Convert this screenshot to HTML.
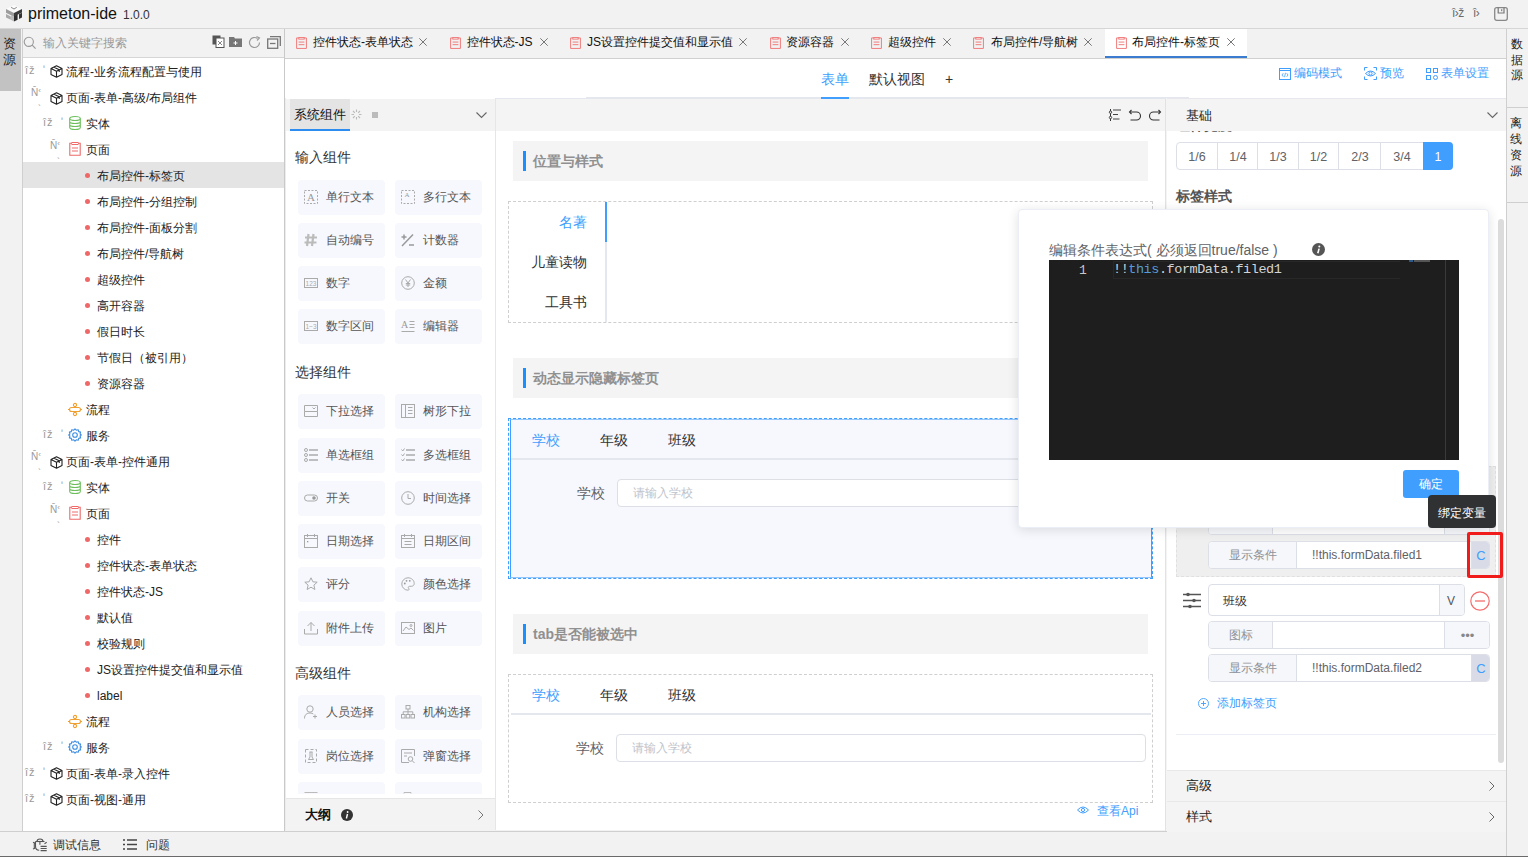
<!DOCTYPE html>
<html><head><meta charset="utf-8">
<style>
*{box-sizing:border-box;margin:0;padding:0}
html,body{width:1528px;height:857px;overflow:hidden;background:#f2f2f2;font-family:"Liberation Sans",sans-serif;font-size:12px;color:#333;position:relative}
.a{position:absolute}
.t{position:absolute;white-space:nowrap;line-height:1}
svg{position:absolute;overflow:visible}
/* title */
#title{left:0;top:0;width:1528px;height:29px;background:#f2f2f2;border-bottom:1px solid #d6d6d6}
/* left */
#lstrip{left:0;top:29px;width:22px;height:802px;background:#f2f2f2}
#lpanel{left:22px;top:29px;width:263px;height:802px;background:#fff;border-left:1px solid #cfcfcf;border-right:1px solid #c9c9c9}
.tr{position:absolute;left:0;width:261px;height:26px;line-height:26px;font-size:12px;color:#222}
.tr span{position:absolute;top:1px}
.dot{position:absolute;width:5px;height:5px;border-radius:50%;background:#f06767;top:11px;left:63px}
.exp{position:absolute;top:0;color:#aaa;font-size:11px}
/* status */
#status{left:0;top:831px;width:1506px;height:26px;background:#f2f2f2;border-top:1px solid #cfcfcf}
/* tabs */
#tabs{left:285px;top:29px;width:1221px;height:30px;background:#f2f2f2;border-bottom:1px solid #d0d0d0}
#sub{left:285px;top:59px;width:1221px;height:39px;background:#fff}
#comp{left:285px;top:98px;width:210px;height:732px;background:#fff;border-left:1px solid #ececec}
#canvas{left:495px;top:98px;width:671px;height:732px;background:#fff;border-left:1px solid #e6e6e6}
#props{left:1166px;top:98px;width:340px;height:733px;background:#fff;border-left:1px solid #f4f4f4}
#rstrip{left:1506px;top:29px;width:22px;height:828px;background:#f2f2f2;border-left:1px solid #cfcfcf}
.cb{position:absolute;width:87px;height:35px;background:#f7f8fd;border-radius:4px}
</style></head><body>
<!-- TITLE -->
<div id="title" class="a">
  <svg style="left:0px;top:0px" width="28" height="28" viewBox="0 0 28 28">
    <path d="M6 9 L14 5 L22 9 L14 13Z" fill="#fbfbfb"/>
    <path d="M11 6.8 L14 8.6 L16.8 6.8 L16.8 7.8 L14 9.4 L11 7.8Z" fill="#8a8a8a"/>
    <path d="M6 9 L14 13 L14 16.8 L6 12.8Z" fill="#9c9c9c"/>
    <path d="M6 14 L10.8 16.4 L10.8 19.8 L6 17.4Z" fill="#a8a8a8"/>
    <path d="M11 15 L14 16.6 L14 21.6 L11 20Z" fill="#bdbdbd"/>
    <path d="M14 13 L22 9 L22 12.6 L14 16.6Z" fill="#3a3a3a"/>
    <path d="M14 16 L17.6 14.2 L17.6 19.8 L14 21.6Z" fill="#2e2e2e"/>
    <path d="M19 14.2 L22 12.7 L22 17.6 L19 19Z" fill="#333"/>
  </svg>
  <span class="t" style="left:28px;top:6px;font-size:16px;color:#111">primeton-ide</span>
  <span class="t" style="left:123px;top:9px;font-size:12px;color:#333">1.0.0</span>
  <span class="t" style="left:1452px;top:7px;font-size:12px;color:#6a6a6a;letter-spacing:-0.5px">î›ž</span>
  <span class="t" style="left:1473px;top:7px;font-size:12px;color:#6a6a6a;letter-spacing:-0.5px">î›</span>
  <svg style="left:1494px;top:7px" width="14" height="14" viewBox="0 0 14 14"><rect x="0.7" y="0.7" width="12.6" height="12.6" rx="2" fill="none" stroke="#888" stroke-width="1.3"/><path d="M4.2 0.7 V6 H10 V0.7" fill="none" stroke="#777" stroke-width="1.2"/><rect x="7" y="2.2" width="1.3" height="2" fill="#888"/></svg>
</div>
<!-- LEFT STRIP -->
<div id="lstrip" class="a">
  <div class="a" style="left:0;top:0;width:21px;height:62px;background:#c2c2c2"></div>
  <span class="t" style="left:3px;top:7px;font-size:13px;color:#222;width:13px;white-space:normal;line-height:15.75px">资源</span>
</div>
<!-- LEFT PANEL -->
<div id="lpanel" class="a">
  <div class="a" style="left:0;top:0;width:261px;height:29px;background:#f2f2f2;border-bottom:1px solid #d6d6d6"></div>
  <svg style="left:0px;top:7px" width="14" height="14" viewBox="0 0 14 14"><circle cx="5.8" cy="5.8" r="4.6" fill="none" stroke="#999" stroke-width="1.1"/><path d="M9.2 9.2 L12.6 12.6" stroke="#999" stroke-width="1.2"/></svg>
  <span class="t" style="left:20px;top:8px;font-size:12px;color:#999">输入关键字搜索</span>
  <svg style="left:189px;top:6px" width="13" height="13" viewBox="0 0 13 13"><rect x="0.5" y="0.5" width="8" height="9" fill="#555"/><rect x="4" y="3" width="8" height="9.5" fill="#fff" stroke="#555" stroke-width="1"/><path d="M6 6 L10 10 M10 6 L6 10" stroke="#666" stroke-width="0.8"/></svg>
  <svg style="left:206px;top:7px" width="13" height="11" viewBox="0 0 13 11"><path d="M0 1 L5 1 L6 2.5 L13 2.5 L13 11 L0 11Z" fill="#777"/><path d="M6.5 5 L6.5 9 M4.5 7 L8.5 7" stroke="#fff" stroke-width="1"/></svg>
  <svg style="left:225px;top:7px" width="13" height="13" viewBox="0 0 13 13"><path d="M11.5 6.5 A5 5 0 1 1 9.5 2.5" fill="none" stroke="#999" stroke-width="1.2"/><path d="M8.5 0.5 L11.5 2 L9 4.5" fill="none" stroke="#999" stroke-width="1.1"/></svg>
  <svg style="left:244px;top:7px" width="14" height="13" viewBox="0 0 14 13"><rect x="0.7" y="3" width="10" height="9.3" fill="none" stroke="#777" stroke-width="1.3"/><path d="M3 0.7 L13.3 0.7 L13.3 10" fill="none" stroke="#777" stroke-width="1.3"/><path d="M3 7.5 L8.5 7.5" stroke="#777" stroke-width="1.3"/></svg>
  <div class="a" style="left:0;top:29px;width:261px;height:773px" id="tree">
<div class="tr" style="top:0px;"><span class="t" style="left:2px;top:7px;font-size:11px;color:#9a9a9a;letter-spacing:1px">îž</span><span class="t" style="left:20px;top:7px;font-size:10px;color:#9a9a9a">ʹ</span><svg style="left:27px;top:7px" width="13" height="13" viewBox="0 0 13 13"><path d="M6.5 0.8 L12 3.4 L12 9.6 L6.5 12.2 L1 9.6 L1 3.4Z M1 3.4 L6.5 6.2 L12 3.4 M6.5 6.2 L6.5 12.2 M3.6 2.1 L9.2 4.8 L9.2 7" fill="none" stroke="#222" stroke-width="1.1" stroke-linejoin="round"/></svg><span style="left:43px">流程-业务流程配置与使用</span></div>
<div class="tr" style="top:26px;"><span class="t" style="left:8px;top:3px;font-size:10px;color:#9a9a9a">N̄<small style="font-size:8px;vertical-align:3px">‹</small></span><span class="t" style="left:15px;top:20px;font-size:9px;color:#9a9a9a">`</span><svg style="left:27px;top:8px" width="13" height="13" viewBox="0 0 13 13"><path d="M6.5 0.8 L12 3.4 L12 9.6 L6.5 12.2 L1 9.6 L1 3.4Z M1 3.4 L6.5 6.2 L12 3.4 M6.5 6.2 L6.5 12.2 M3.6 2.1 L9.2 4.8 L9.2 7" fill="none" stroke="#222" stroke-width="1.1" stroke-linejoin="round"/></svg><span style="left:43px">页面-表单-高级/布局组件</span></div>
<div class="tr" style="top:52px;"><span class="t" style="left:20px;top:7px;font-size:11px;color:#9a9a9a;letter-spacing:1px">îž</span><span class="t" style="left:38px;top:7px;font-size:10px;color:#9a9a9a">ʹ</span><svg style="left:46px;top:6px" width="12" height="14" viewBox="0 0 12 14"><ellipse cx="6" cy="2.5" rx="5.3" ry="2" fill="none" stroke="#6cbf5c" stroke-width="1.1"/><path d="M0.7 2.5 V11.5 A5.3 2 0 0 0 11.3 11.5 V2.5 M0.7 5.5 A5.3 2 0 0 0 11.3 5.5 M0.7 8.5 A5.3 2 0 0 0 11.3 8.5" fill="none" stroke="#6cbf5c" stroke-width="1.1"/></svg><span style="left:63px">实体</span></div>
<div class="tr" style="top:78px;"><span class="t" style="left:27px;top:4px;font-size:10px;color:#9a9a9a">N̄<small style="font-size:8px;vertical-align:3px">‹</small></span><span class="t" style="left:34px;top:21px;font-size:9px;color:#9a9a9a">`</span><svg style="left:46px;top:6px" width="12" height="14" viewBox="0 0 12 14"><path d="M3 1.2 H0.8 V13.2 H11.2 V1.2 H9" fill="none" stroke="#f06a6a" stroke-width="1.1"/><rect x="3" y="0.5" width="6" height="2" fill="none" stroke="#f06a6a" stroke-width="1"/><path d="M3 6 H9 M3 9 H9" stroke="#f06a6a" stroke-width="1.1"/></svg><span style="left:63px">页面</span></div>
<div class="tr" style="top:104px;background:#e4e4e4"><i class="dot" style="left:62px"></i><span style="left:74px">布局控件-标签页</span></div>
<div class="tr" style="top:130px;"><i class="dot" style="left:62px"></i><span style="left:74px">布局控件-分组控制</span></div>
<div class="tr" style="top:156px;"><i class="dot" style="left:62px"></i><span style="left:74px">布局控件-面板分割</span></div>
<div class="tr" style="top:182px;"><i class="dot" style="left:62px"></i><span style="left:74px">布局控件/导航树</span></div>
<div class="tr" style="top:208px;"><i class="dot" style="left:62px"></i><span style="left:74px">超级控件</span></div>
<div class="tr" style="top:234px;"><i class="dot" style="left:62px"></i><span style="left:74px">高开容器</span></div>
<div class="tr" style="top:260px;"><i class="dot" style="left:62px"></i><span style="left:74px">假日时长</span></div>
<div class="tr" style="top:286px;"><i class="dot" style="left:62px"></i><span style="left:74px">节假日（被引用）</span></div>
<div class="tr" style="top:312px;"><i class="dot" style="left:62px"></i><span style="left:74px">资源容器</span></div>
<div class="tr" style="top:338px;"><svg style="left:45px;top:7px" width="14" height="13" viewBox="0 0 14 13"><circle cx="7" cy="2" r="1.6" fill="none" stroke="#f0a030" stroke-width="1.1"/><circle cx="7" cy="11" r="1.6" fill="none" stroke="#f0a030" stroke-width="1.1"/><rect x="1.5" y="4.5" width="11" height="4" rx="2" fill="none" stroke="#f0a030" stroke-width="1.1"/><path d="M7 3.6 V4.5 M7 8.5 V9.4 M0 6.5 H1.5 M12.5 6.5 H14" stroke="#f0a030" stroke-width="1.1"/></svg><span style="left:63px">流程</span></div>
<div class="tr" style="top:364px;"><span class="t" style="left:20px;top:7px;font-size:11px;color:#9a9a9a;letter-spacing:1px">îž</span><span class="t" style="left:38px;top:7px;font-size:10px;color:#9a9a9a">ʹ</span><svg style="left:45px;top:6px" width="14" height="14" viewBox="0 0 14 14"><path d="M7 0.8 L8.3 2.2 L10.2 1.7 L10.7 3.6 L12.6 4.1 L12.1 6 L13.3 7 L12.1 8 L12.6 9.9 L10.7 10.4 L10.2 12.3 L8.3 11.8 L7 13.2 L5.7 11.8 L3.8 12.3 L3.3 10.4 L1.4 9.9 L1.9 8 L0.7 7 L1.9 6 L1.4 4.1 L3.3 3.6 L3.8 1.7 L5.7 2.2Z" fill="none" stroke="#3d8fe0" stroke-width="1.1" stroke-linejoin="round"/><circle cx="7" cy="7" r="2.3" fill="none" stroke="#3d8fe0" stroke-width="1.1"/></svg><span style="left:63px">服务</span></div>
<div class="tr" style="top:390px;"><span class="t" style="left:8px;top:3px;font-size:10px;color:#9a9a9a">N̄<small style="font-size:8px;vertical-align:3px">‹</small></span><span class="t" style="left:15px;top:20px;font-size:9px;color:#9a9a9a">`</span><svg style="left:27px;top:8px" width="13" height="13" viewBox="0 0 13 13"><path d="M6.5 0.8 L12 3.4 L12 9.6 L6.5 12.2 L1 9.6 L1 3.4Z M1 3.4 L6.5 6.2 L12 3.4 M6.5 6.2 L6.5 12.2 M3.6 2.1 L9.2 4.8 L9.2 7" fill="none" stroke="#222" stroke-width="1.1" stroke-linejoin="round"/></svg><span style="left:43px">页面-表单-控件通用</span></div>
<div class="tr" style="top:416px;"><span class="t" style="left:20px;top:7px;font-size:11px;color:#9a9a9a;letter-spacing:1px">îž</span><span class="t" style="left:38px;top:7px;font-size:10px;color:#9a9a9a">ʹ</span><svg style="left:46px;top:6px" width="12" height="14" viewBox="0 0 12 14"><ellipse cx="6" cy="2.5" rx="5.3" ry="2" fill="none" stroke="#6cbf5c" stroke-width="1.1"/><path d="M0.7 2.5 V11.5 A5.3 2 0 0 0 11.3 11.5 V2.5 M0.7 5.5 A5.3 2 0 0 0 11.3 5.5 M0.7 8.5 A5.3 2 0 0 0 11.3 8.5" fill="none" stroke="#6cbf5c" stroke-width="1.1"/></svg><span style="left:63px">实体</span></div>
<div class="tr" style="top:442px;"><span class="t" style="left:27px;top:4px;font-size:10px;color:#9a9a9a">N̄<small style="font-size:8px;vertical-align:3px">‹</small></span><span class="t" style="left:34px;top:21px;font-size:9px;color:#9a9a9a">`</span><svg style="left:46px;top:6px" width="12" height="14" viewBox="0 0 12 14"><path d="M3 1.2 H0.8 V13.2 H11.2 V1.2 H9" fill="none" stroke="#f06a6a" stroke-width="1.1"/><rect x="3" y="0.5" width="6" height="2" fill="none" stroke="#f06a6a" stroke-width="1"/><path d="M3 6 H9 M3 9 H9" stroke="#f06a6a" stroke-width="1.1"/></svg><span style="left:63px">页面</span></div>
<div class="tr" style="top:468px;"><i class="dot" style="left:62px"></i><span style="left:74px">控件</span></div>
<div class="tr" style="top:494px;"><i class="dot" style="left:62px"></i><span style="left:74px">控件状态-表单状态</span></div>
<div class="tr" style="top:520px;"><i class="dot" style="left:62px"></i><span style="left:74px">控件状态-JS</span></div>
<div class="tr" style="top:546px;"><i class="dot" style="left:62px"></i><span style="left:74px">默认值</span></div>
<div class="tr" style="top:572px;"><i class="dot" style="left:62px"></i><span style="left:74px">校验规则</span></div>
<div class="tr" style="top:598px;"><i class="dot" style="left:62px"></i><span style="left:74px">JS设置控件提交值和显示值</span></div>
<div class="tr" style="top:624px;"><i class="dot" style="left:62px"></i><span style="left:74px">label</span></div>
<div class="tr" style="top:650px;"><svg style="left:45px;top:7px" width="14" height="13" viewBox="0 0 14 13"><circle cx="7" cy="2" r="1.6" fill="none" stroke="#f0a030" stroke-width="1.1"/><circle cx="7" cy="11" r="1.6" fill="none" stroke="#f0a030" stroke-width="1.1"/><rect x="1.5" y="4.5" width="11" height="4" rx="2" fill="none" stroke="#f0a030" stroke-width="1.1"/><path d="M7 3.6 V4.5 M7 8.5 V9.4 M0 6.5 H1.5 M12.5 6.5 H14" stroke="#f0a030" stroke-width="1.1"/></svg><span style="left:63px">流程</span></div>
<div class="tr" style="top:676px;"><span class="t" style="left:20px;top:7px;font-size:11px;color:#9a9a9a;letter-spacing:1px">îž</span><span class="t" style="left:38px;top:7px;font-size:10px;color:#9a9a9a">ʹ</span><svg style="left:45px;top:6px" width="14" height="14" viewBox="0 0 14 14"><path d="M7 0.8 L8.3 2.2 L10.2 1.7 L10.7 3.6 L12.6 4.1 L12.1 6 L13.3 7 L12.1 8 L12.6 9.9 L10.7 10.4 L10.2 12.3 L8.3 11.8 L7 13.2 L5.7 11.8 L3.8 12.3 L3.3 10.4 L1.4 9.9 L1.9 8 L0.7 7 L1.9 6 L1.4 4.1 L3.3 3.6 L3.8 1.7 L5.7 2.2Z" fill="none" stroke="#3d8fe0" stroke-width="1.1" stroke-linejoin="round"/><circle cx="7" cy="7" r="2.3" fill="none" stroke="#3d8fe0" stroke-width="1.1"/></svg><span style="left:63px">服务</span></div>
<div class="tr" style="top:702px;"><span class="t" style="left:2px;top:7px;font-size:11px;color:#9a9a9a;letter-spacing:1px">îž</span><span class="t" style="left:20px;top:7px;font-size:10px;color:#9a9a9a">ʹ</span><svg style="left:27px;top:7px" width="13" height="13" viewBox="0 0 13 13"><path d="M6.5 0.8 L12 3.4 L12 9.6 L6.5 12.2 L1 9.6 L1 3.4Z M1 3.4 L6.5 6.2 L12 3.4 M6.5 6.2 L6.5 12.2 M3.6 2.1 L9.2 4.8 L9.2 7" fill="none" stroke="#222" stroke-width="1.1" stroke-linejoin="round"/></svg><span style="left:43px">页面-表单-录入控件</span></div>
<div class="tr" style="top:728px;"><span class="t" style="left:2px;top:7px;font-size:11px;color:#9a9a9a;letter-spacing:1px">îž</span><span class="t" style="left:20px;top:7px;font-size:10px;color:#9a9a9a">ʹ</span><svg style="left:27px;top:7px" width="13" height="13" viewBox="0 0 13 13"><path d="M6.5 0.8 L12 3.4 L12 9.6 L6.5 12.2 L1 9.6 L1 3.4Z M1 3.4 L6.5 6.2 L12 3.4 M6.5 6.2 L6.5 12.2 M3.6 2.1 L9.2 4.8 L9.2 7" fill="none" stroke="#222" stroke-width="1.1" stroke-linejoin="round"/></svg><span style="left:43px">页面-视图-通用</span></div>
</div>
</div>
<!-- STATUS -->
<div id="status" class="a">
  <svg style="left:28px;top:2px" width="24" height="20" viewBox="0 0 24 20"><path d="M9 7.5 A3 2.5 0 0 1 15 7.5" fill="none" stroke="#555" stroke-width="1.1"/><path d="M7.5 7.5 H16.5" stroke="#555" stroke-width="1.1"/><path d="M7.5 7.5 V12 Q7.5 16.3 11.2 16.3" fill="none" stroke="#555" stroke-width="1.1"/><path d="M11.9 7.5 V10.7" stroke="#555" stroke-width="1.1"/><path d="M5 8.3 L7.5 9.3 M6.3 9.3 V14 M5 15 L7.5 14 M16.5 9.7 L18.7 8.3" fill="none" stroke="#555" stroke-width="1.1"/><path d="M12.6 12.4 H18.7 M12.6 14.5 H18.7 M12.6 16.6 H18.7" stroke="#555" stroke-width="1.1"/></svg>
  <span class="t" style="left:53px;top:7px;font-size:12px;color:#333">调试信息</span>
  <svg style="left:123px;top:7px" width="14" height="11" viewBox="0 0 14 11"><path d="M0 1 H2 M0 5.5 H2 M0 10 H2 M4 1 H14 M4 5.5 H14 M4 10 H14" stroke="#444" stroke-width="1.3"/></svg>
  <span class="t" style="left:146px;top:7px;font-size:12px;color:#333">问题</span>
</div>
<!-- TABS -->
<div id="tabs" class="a">
<div class="a" style="left:820px;top:0;width:142px;height:29px;background:#fff;border-bottom:2px solid #3b7bd0"></div>
<svg style="left:11px;top:8px" width="11" height="12" viewBox="0 0 11 13" preserveAspectRatio="none"><path d="M2.8 1 H0.6 V12.4 H10.4 V1 H8.2" fill="none" stroke="#f07878" stroke-width="1"/><rect x="2.8" y="0.5" width="5.4" height="1.8" fill="none" stroke="#f07878" stroke-width="1"/><path d="M2.6 5.5 H8.4 M2.6 8.3 H8.4" stroke="#f07878" stroke-width="1"/></svg>
<span class="t" style="left:28px;top:7px;font-size:12px;color:#111">控件状态-表单状态</span>
<svg style="left:134px;top:9px" width="8" height="8" viewBox="0 0 8 8"><path d="M0.3 0.3 L7.7 7.7 M7.7 0.3 L0.3 7.7" stroke="#777" stroke-width="1"/></svg>
<svg style="left:165px;top:8px" width="11" height="12" viewBox="0 0 11 13" preserveAspectRatio="none"><path d="M2.8 1 H0.6 V12.4 H10.4 V1 H8.2" fill="none" stroke="#f07878" stroke-width="1"/><rect x="2.8" y="0.5" width="5.4" height="1.8" fill="none" stroke="#f07878" stroke-width="1"/><path d="M2.6 5.5 H8.4 M2.6 8.3 H8.4" stroke="#f07878" stroke-width="1"/></svg>
<span class="t" style="left:181.5px;top:7px;font-size:12px;color:#111">控件状态-JS</span>
<svg style="left:255px;top:9px" width="8" height="8" viewBox="0 0 8 8"><path d="M0.3 0.3 L7.7 7.7 M7.7 0.3 L0.3 7.7" stroke="#777" stroke-width="1"/></svg>
<svg style="left:285px;top:8px" width="11" height="12" viewBox="0 0 11 13" preserveAspectRatio="none"><path d="M2.8 1 H0.6 V12.4 H10.4 V1 H8.2" fill="none" stroke="#f07878" stroke-width="1"/><rect x="2.8" y="0.5" width="5.4" height="1.8" fill="none" stroke="#f07878" stroke-width="1"/><path d="M2.6 5.5 H8.4 M2.6 8.3 H8.4" stroke="#f07878" stroke-width="1"/></svg>
<span class="t" style="left:302px;top:7px;font-size:12px;color:#111">JS设置控件提交值和显示值</span>
<svg style="left:454px;top:9px" width="8" height="8" viewBox="0 0 8 8"><path d="M0.3 0.3 L7.7 7.7 M7.7 0.3 L0.3 7.7" stroke="#777" stroke-width="1"/></svg>
<svg style="left:485px;top:8px" width="11" height="12" viewBox="0 0 11 13" preserveAspectRatio="none"><path d="M2.8 1 H0.6 V12.4 H10.4 V1 H8.2" fill="none" stroke="#f07878" stroke-width="1"/><rect x="2.8" y="0.5" width="5.4" height="1.8" fill="none" stroke="#f07878" stroke-width="1"/><path d="M2.6 5.5 H8.4 M2.6 8.3 H8.4" stroke="#f07878" stroke-width="1"/></svg>
<span class="t" style="left:501px;top:7px;font-size:12px;color:#111">资源容器</span>
<svg style="left:556px;top:9px" width="8" height="8" viewBox="0 0 8 8"><path d="M0.3 0.3 L7.7 7.7 M7.7 0.3 L0.3 7.7" stroke="#777" stroke-width="1"/></svg>
<svg style="left:586px;top:8px" width="11" height="12" viewBox="0 0 11 13" preserveAspectRatio="none"><path d="M2.8 1 H0.6 V12.4 H10.4 V1 H8.2" fill="none" stroke="#f07878" stroke-width="1"/><rect x="2.8" y="0.5" width="5.4" height="1.8" fill="none" stroke="#f07878" stroke-width="1"/><path d="M2.6 5.5 H8.4 M2.6 8.3 H8.4" stroke="#f07878" stroke-width="1"/></svg>
<span class="t" style="left:603px;top:7px;font-size:12px;color:#111">超级控件</span>
<svg style="left:658px;top:9px" width="8" height="8" viewBox="0 0 8 8"><path d="M0.3 0.3 L7.7 7.7 M7.7 0.3 L0.3 7.7" stroke="#777" stroke-width="1"/></svg>
<svg style="left:688px;top:8px" width="11" height="12" viewBox="0 0 11 13" preserveAspectRatio="none"><path d="M2.8 1 H0.6 V12.4 H10.4 V1 H8.2" fill="none" stroke="#f07878" stroke-width="1"/><rect x="2.8" y="0.5" width="5.4" height="1.8" fill="none" stroke="#f07878" stroke-width="1"/><path d="M2.6 5.5 H8.4 M2.6 8.3 H8.4" stroke="#f07878" stroke-width="1"/></svg>
<span class="t" style="left:706px;top:7px;font-size:12px;color:#111">布局控件/导航树</span>
<svg style="left:799px;top:9px" width="8" height="8" viewBox="0 0 8 8"><path d="M0.3 0.3 L7.7 7.7 M7.7 0.3 L0.3 7.7" stroke="#777" stroke-width="1"/></svg>
<svg style="left:831px;top:8px" width="11" height="12" viewBox="0 0 11 13" preserveAspectRatio="none"><path d="M2.8 1 H0.6 V12.4 H10.4 V1 H8.2" fill="none" stroke="#f07878" stroke-width="1"/><rect x="2.8" y="0.5" width="5.4" height="1.8" fill="none" stroke="#f07878" stroke-width="1"/><path d="M2.6 5.5 H8.4 M2.6 8.3 H8.4" stroke="#f07878" stroke-width="1"/></svg>
<span class="t" style="left:847px;top:7px;font-size:12px;color:#111">布局控件-标签页</span>
<svg style="left:942px;top:9px" width="8" height="8" viewBox="0 0 8 8"><path d="M0.3 0.3 L7.7 7.7 M7.7 0.3 L0.3 7.7" stroke="#777" stroke-width="1"/></svg>
</div>
<div id="sub" class="a">
<span class="t" style="left:536px;top:13px;font-size:14px;color:#409eff">表单</span>
<div class="a" style="left:536px;top:38px;width:28px;height:2px;background:#409eff"></div>
<span class="t" style="left:584px;top:13px;font-size:14px;color:#333">默认视图</span>
<span class="t" style="left:660px;top:13px;font-size:14px;color:#333">+</span>
<div class="a" style="left:0;top:39px;width:1221px;height:1px;background:#f1eced"></div><div class="a" style="left:301px;top:38px;width:603px;height:2px;background:#e4e7ed"></div>
<div class="a" style="left:536px;top:38px;width:28px;height:2px;background:#409eff"></div>
<svg style="left:994px;top:9px" width="12" height="12" viewBox="0 0 12 12"><rect x="0.5" y="0.5" width="11" height="11" fill="none" stroke="#409eff" stroke-width="1"/><path d="M0.5 2.5 H11.5" stroke="#409eff" stroke-width="1"/><path d="M4.3 5.2 L3 7 L4.3 8.8 M7.7 5.2 L9 7 L7.7 8.8 M6.5 4.8 L5.5 9.2" fill="none" stroke="#409eff" stroke-width="0.8"/></svg>
<span class="t" style="left:1009px;top:8px;font-size:12px;color:#409eff">编码模式</span>
<svg style="left:1079px;top:8px" width="13" height="13" viewBox="0 0 13 13"><path d="M0.5 3.5 V0.5 H3.5 M9.5 0.5 H12.5 V3.5 M12.5 9.5 V12.5 H9.5 M3.5 12.5 H0.5 V9.5" fill="none" stroke="#409eff" stroke-width="1"/><path d="M1.5 6.5 Q6.5 1.5 11.5 6.5 Q6.5 11.5 1.5 6.5Z" fill="none" stroke="#409eff" stroke-width="1"/><circle cx="6.5" cy="6.5" r="1.6" fill="none" stroke="#409eff" stroke-width="1"/></svg>
<span class="t" style="left:1095px;top:8px;font-size:12px;color:#409eff">预览</span>
<svg style="left:1141px;top:9px" width="12" height="12" viewBox="0 0 12 12"><rect x="0.5" y="0.5" width="4" height="4" fill="none" stroke="#409eff" stroke-width="1"/><rect x="7.5" y="0.5" width="4" height="4" fill="none" stroke="#409eff" stroke-width="1"/><rect x="0.5" y="7.5" width="4" height="4" fill="none" stroke="#409eff" stroke-width="1"/><circle cx="9.5" cy="9.5" r="2" fill="none" stroke="#409eff" stroke-width="1"/></svg>
<span class="t" style="left:1156px;top:8px;font-size:12px;color:#409eff">表单设置</span>
</div>
<div id="comp" class="a">
<div class="a" style="left:0;top:1px;width:209px;height:32px;background:#f3f3f3"></div>
<div class="a" style="left:4px;top:1px;width:60px;height:32px;background:#e4e4e4;border-bottom:2px solid #2d8cf0"></div>
<span class="t" style="left:8px;top:10px;font-size:13px;color:#111">系统组件</span>
<svg style="left:65px;top:11px" width="11" height="11" viewBox="0 0 11 11"><path d="M5.5 0.5 V3 M5.5 8 V10.5 M0.5 5.5 H3 M8 5.5 H10.5 M2 2 L3.8 3.8 M7.2 7.2 L9 9 M9 2 L7.2 3.8 M3.8 7.2 L2 9" stroke="#bbb" stroke-width="1.1"/></svg>
<div class="a" style="left:86px;top:14px;width:6px;height:6px;background:#bbb"></div>
<svg style="left:190px;top:14px" width="11" height="7" viewBox="0 0 11 7"><path d="M0.5 0.5 L5.5 5.5 L10.5 0.5" stroke="#666" stroke-width="1.1" fill="none"/></svg>
<div class="a" style="left:0;top:32px;width:209px;height:664px;overflow:hidden">
<span class="t" style="left:9px;top:20px;font-size:14px;color:#333">输入组件</span>
<span class="t" style="left:9px;top:235px;font-size:14px;color:#333">选择组件</span>
<span class="t" style="left:9px;top:536px;font-size:14px;color:#333">高级组件</span>
<div class="cb" style="left:12px;top:50px"></div><svg style="left:18px;top:60px" width="14" height="14" viewBox="0 0 14 14"><rect x="0.5" y="0.5" width="13" height="13" stroke="#aaa" stroke-width="1" fill="none" stroke-dasharray="2 1.5"/><text x="7" y="11" font-size="11" font-family="Liberation Serif" text-anchor="middle" fill="#999">A</text></svg><span class="t" style="left:40px;top:61px;font-size:12px;color:#555">单行文本</span>
<div class="cb" style="left:109px;top:50px"></div><svg style="left:115px;top:60px" width="14" height="14" viewBox="0 0 14 14"><rect x="0.5" y="0.5" width="13" height="13" stroke="#aaa" stroke-width="1" fill="none" stroke-dasharray="2 1.5"/><text x="6" y="7" font-size="7" font-family="Liberation Serif" text-anchor="middle" fill="#999">A</text></svg><span class="t" style="left:137px;top:61px;font-size:12px;color:#555">多行文本</span>
<div class="cb" style="left:12px;top:93px"></div><svg style="left:18px;top:103px" width="14" height="14" viewBox="0 0 14 14"><path d="M4.5 1 L3 13 M9.5 1 L8 13 M1 4.5 H13 M0.5 9.5 H12.5" stroke="#bbb" stroke-width="2.2" fill="none"/></svg><span class="t" style="left:40px;top:104px;font-size:12px;color:#555">自动编号</span>
<div class="cb" style="left:109px;top:93px"></div><svg style="left:115px;top:103px" width="14" height="14" viewBox="0 0 14 14"><path d="M0.5 4 H5.5 M3 1.5 V6.5 M1 13 L12 1.5 M8 12 H13" stroke="#999" stroke-width="1.5" fill="none"/></svg><span class="t" style="left:137px;top:104px;font-size:12px;color:#555">计数器</span>
<div class="cb" style="left:12px;top:136px"></div><svg style="left:18px;top:146px" width="14" height="14" viewBox="0 0 14 14"><rect x="0.5" y="2.5" width="13" height="9" stroke="#aaa" stroke-width="1" fill="none"/><text x="7" y="10" font-size="6.5" text-anchor="middle" fill="#aaa">123</text></svg><span class="t" style="left:40px;top:147px;font-size:12px;color:#555">数字</span>
<div class="cb" style="left:109px;top:136px"></div><svg style="left:115px;top:146px" width="14" height="14" viewBox="0 0 14 14"><circle cx="7" cy="7" r="6.3" stroke="#aaa" stroke-width="1" fill="none"/><path d="M4.5 3.5 L7 7 L9.5 3.5 M7 7 V11 M4.8 7.5 H9.2 M4.8 9 H9.2" stroke="#aaa" stroke-width="1" fill="none"/></svg><span class="t" style="left:137px;top:147px;font-size:12px;color:#555">金额</span>
<div class="cb" style="left:12px;top:179px"></div><svg style="left:18px;top:189px" width="14" height="14" viewBox="0 0 14 14"><rect x="0.5" y="2.5" width="13" height="9" stroke="#aaa" stroke-width="1" fill="none"/><text x="7" y="10" font-size="6.5" text-anchor="middle" fill="#aaa">1~3</text></svg><span class="t" style="left:40px;top:190px;font-size:12px;color:#555">数字区间</span>
<div class="cb" style="left:109px;top:179px"></div><svg style="left:115px;top:189px" width="14" height="14" viewBox="0 0 14 14"><text x="0" y="9" font-size="10" fill="#999" font-family="Liberation Serif">A</text><path d="M8.5 2.5 H13.5 M8.5 5.5 H13.5 M8.5 8.5 H13.5 M0.5 12.5 H13.5" stroke="#aaa" stroke-width="1" fill="none"/></svg><span class="t" style="left:137px;top:190px;font-size:12px;color:#555">编辑器</span>
<div class="cb" style="left:12px;top:264px"></div><svg style="left:18px;top:274px" width="14" height="14" viewBox="0 0 14 14"><path d="M0.5 1.5 H13.5 V7.5 H0.5Z M0.5 7.5 V12.5 H13.5 V7.5 M8.5 3.5 L10 5 L11.5 3.5" stroke="#aaa" stroke-width="1" fill="none"/></svg><span class="t" style="left:40px;top:275px;font-size:12px;color:#555">下拉选择</span>
<div class="cb" style="left:109px;top:264px"></div><svg style="left:115px;top:274px" width="14" height="14" viewBox="0 0 14 14"><rect x="0.5" y="0.5" width="13" height="13" stroke="#aaa" stroke-width="1" fill="none"/><path d="M4.5 0.5 V13.5 M7 3.5 H11.5 M7 6.5 H11.5 M7 9.5 H11.5" stroke="#aaa" stroke-width="1" fill="none"/></svg><span class="t" style="left:137px;top:275px;font-size:12px;color:#555">树形下拉</span>
<div class="cb" style="left:12px;top:308px"></div><svg style="left:18px;top:318px" width="14" height="14" viewBox="0 0 14 14"><circle cx="2" cy="2" r="1.5" stroke="#aaa" stroke-width="1" fill="none"/><circle cx="2" cy="7" r="1.5" stroke="#aaa" stroke-width="1" fill="none"/><circle cx="2" cy="12" r="1.5" stroke="#aaa" stroke-width="1" fill="none"/><path d="M5 2 H14 M5 7 H14 M5 12 H14" stroke="#aaa" stroke-width="1.3"/></svg><span class="t" style="left:40px;top:319px;font-size:12px;color:#555">单选框组</span>
<div class="cb" style="left:109px;top:308px"></div><svg style="left:115px;top:318px" width="14" height="14" viewBox="0 0 14 14"><path d="M0.5 1.5 L1.8 3 L3.5 0.5 M0.5 6.5 L1.8 8 L3.5 5.5 M0.5 11.5 L1.8 13 L3.5 10.5" stroke="#aaa" stroke-width="1" fill="none"/><path d="M5 2 H14 M5 7 H14 M5 12 H14" stroke="#aaa" stroke-width="1.3"/></svg><span class="t" style="left:137px;top:319px;font-size:12px;color:#555">多选框组</span>
<div class="cb" style="left:12px;top:351px"></div><svg style="left:18px;top:361px" width="14" height="14" viewBox="0 0 14 14"><rect x="0.5" y="4" width="13" height="6" rx="3" stroke="#aaa" stroke-width="1" fill="none"/><circle cx="10" cy="7" r="1.8" fill="#999"/></svg><span class="t" style="left:40px;top:362px;font-size:12px;color:#555">开关</span>
<div class="cb" style="left:109px;top:351px"></div><svg style="left:115px;top:361px" width="14" height="14" viewBox="0 0 14 14"><circle cx="7" cy="7" r="6.3" stroke="#aaa" stroke-width="1" fill="none"/><path d="M7 3 V7.5 H10" stroke="#aaa" stroke-width="1" fill="none"/></svg><span class="t" style="left:137px;top:362px;font-size:12px;color:#555">时间选择</span>
<div class="cb" style="left:12px;top:394px"></div><svg style="left:18px;top:404px" width="14" height="14" viewBox="0 0 14 14"><rect x="0.5" y="1.5" width="13" height="12" stroke="#aaa" stroke-width="1" fill="none"/><path d="M0.5 4.5 H13.5 M3.5 0 V3 M10.5 0 V3" stroke="#aaa" stroke-width="1" fill="none"/><rect x="3" y="7" width="1.3" height="1.3" fill="#999"/></svg><span class="t" style="left:40px;top:405px;font-size:12px;color:#555">日期选择</span>
<div class="cb" style="left:109px;top:394px"></div><svg style="left:115px;top:404px" width="14" height="14" viewBox="0 0 14 14"><rect x="0.5" y="1.5" width="13" height="12" stroke="#aaa" stroke-width="1" fill="none"/><path d="M0.5 4.5 H13.5 M3.5 0 V3 M10.5 0 V3 M3.5 7.5 H10.5 M3.5 10.5 H10.5" stroke="#aaa" stroke-width="1" fill="none"/></svg><span class="t" style="left:137px;top:405px;font-size:12px;color:#555">日期区间</span>
<div class="cb" style="left:12px;top:437px"></div><svg style="left:18px;top:447px" width="14" height="14" viewBox="0 0 14 14"><path d="M7 0.8 L8.9 4.8 L13.2 5.2 L9.9 8.1 L10.9 12.5 L7 10.2 L3.1 12.5 L4.1 8.1 L0.8 5.2 L5.1 4.8Z" stroke="#aaa" stroke-width="1" fill="none" stroke-linejoin="round"/></svg><span class="t" style="left:40px;top:448px;font-size:12px;color:#555">评分</span>
<div class="cb" style="left:109px;top:437px"></div><svg style="left:115px;top:447px" width="14" height="14" viewBox="0 0 14 14"><path d="M7 0.8 A6.2 6.2 0 1 0 7 13.2 C8.2 13.2 8.3 12 7.6 11.3 C6.9 10.5 7.4 9.3 8.5 9.3 H10.3 C12 9.3 13.2 8.2 13.2 6.5 C13.2 3.3 10.5 0.8 7 0.8Z" stroke="#aaa" stroke-width="1" fill="none"/><circle cx="3.8" cy="6.5" r="0.9" fill="#999"/><circle cx="5.5" cy="3.8" r="0.9" fill="#999"/><circle cx="8.8" cy="3.8" r="0.9" fill="#999"/></svg><span class="t" style="left:137px;top:448px;font-size:12px;color:#555">颜色选择</span>
<div class="cb" style="left:12px;top:481px"></div><svg style="left:18px;top:491px" width="14" height="14" viewBox="0 0 14 14"><path d="M0.5 8 V13 H13.5 V8 M7 10 V1.5 M3.5 5 L7 1.5 L10.5 5" stroke="#aaa" stroke-width="1" fill="none"/></svg><span class="t" style="left:40px;top:492px;font-size:12px;color:#555">附件上传</span>
<div class="cb" style="left:109px;top:481px"></div><svg style="left:115px;top:491px" width="14" height="14" viewBox="0 0 14 14"><rect x="0.5" y="1.5" width="13" height="11" stroke="#aaa" stroke-width="1" fill="none"/><path d="M2 10 L5 6 L8 8.5 L10 7 L12.5 9.5" stroke="#aaa" stroke-width="1" fill="none"/><circle cx="10" cy="4.5" r="1" stroke="#aaa" stroke-width="1" fill="none"/></svg><span class="t" style="left:137px;top:492px;font-size:12px;color:#555">图片</span>
<div class="cb" style="left:12px;top:565px"></div><svg style="left:18px;top:575px" width="14" height="14" viewBox="0 0 14 14"><circle cx="6" cy="4" r="3.2" stroke="#aaa" stroke-width="1" fill="none"/><path d="M0.5 13.5 C0.5 9.5 3 8 6 8 C7.5 8 8.5 8.4 9.3 9" stroke="#aaa" stroke-width="1" fill="none"/><path d="M11 9.5 V13.5 M9 11.5 H13" stroke="#aaa" stroke-width="1" fill="none"/></svg><span class="t" style="left:40px;top:576px;font-size:12px;color:#555">人员选择</span>
<div class="cb" style="left:109px;top:565px"></div><svg style="left:115px;top:575px" width="14" height="14" viewBox="0 0 14 14"><rect x="5" y="0.5" width="4" height="3.5" stroke="#aaa" stroke-width="1" fill="none"/><rect x="0.5" y="9.5" width="3.5" height="3.5" stroke="#aaa" stroke-width="1" fill="none"/><rect x="5.2" y="9.5" width="3.5" height="3.5" stroke="#aaa" stroke-width="1" fill="none"/><rect x="10" y="9.5" width="3.5" height="3.5" stroke="#aaa" stroke-width="1" fill="none"/><path d="M7 4 V9.5 M2.2 9.5 V6.8 H11.8 V9.5" stroke="#aaa" stroke-width="1" fill="none"/></svg><span class="t" style="left:137px;top:576px;font-size:12px;color:#555">机构选择</span>
<div class="cb" style="left:12px;top:609px"></div><svg style="left:18px;top:619px" width="14" height="14" viewBox="0 0 14 14"><path d="M1.5 0.5 H12.5 V13.5 H1.5Z" stroke="#aaa" stroke-width="1" fill="none" stroke-dasharray="3 2"/><path d="M5.5 3 H8.5 M6 3 V8 L4.5 10.5 H9.5 L8 8 V3" stroke="#aaa" stroke-width="1" fill="none"/></svg><span class="t" style="left:40px;top:620px;font-size:12px;color:#555">岗位选择</span>
<div class="cb" style="left:109px;top:609px"></div><svg style="left:115px;top:619px" width="14" height="14" viewBox="0 0 14 14"><path d="M8 13.5 H0.5 V0.5 H13.5 V7" stroke="#aaa" stroke-width="1" fill="none"/><path d="M3 4 H11 M3 7 H6" stroke="#aaa" stroke-width="1" fill="none"/><circle cx="9.5" cy="10" r="2.3" stroke="#aaa" stroke-width="1" fill="none"/><path d="M11.2 11.7 L13.5 14" stroke="#aaa" stroke-width="1" fill="none"/></svg><span class="t" style="left:137px;top:620px;font-size:12px;color:#555">弹窗选择</span>
<div class="cb" style="left:12px;top:652px"></div><div class="cb" style="left:109px;top:652px"></div>
<svg style="left:18px;top:662px" width="14" height="14" viewBox="0 0 14 14"><path d="M0.5 0.5 H13.5" stroke="#bbb"/></svg>
<svg style="left:115px;top:662px" width="14" height="14" viewBox="0 0 14 14"><path d="M3 1.5 V0.5 H10 V1.5" stroke="#bbb" fill="none"/></svg>
</div>
<div class="a" style="left:0;top:700px;width:209px;height:33px;background:#f3f3f3;border-top:1px solid #e6e6e6"></div>
<span class="t" style="left:19px;top:710px;font-size:13px;color:#111;font-weight:bold">大纲</span>
<svg style="left:55px;top:711px" width="12" height="12" viewBox="0 0 12 12"><circle cx="6" cy="6" r="6" fill="#333"/><circle cx="6.6" cy="3" r="0.9" fill="#fff"/><path d="M6.5 5 L5.4 9.5" stroke="#fff" stroke-width="1.4"/></svg>
<svg style="left:192px;top:712px" width="6" height="10" viewBox="0 0 6 10"><path d="M0.5 0.5 L5 5 L0.5 9.5" stroke="#777" stroke-width="1" fill="none"/></svg>
</div>
<div id="canvas" class="a">
<div class="a" style="left:0;top:0;width:670px;height:1px;background:#e4e7ed"></div>
<div class="a" style="left:0;top:1px;width:670px;height:32px;background:#f4f4f4"></div>
<svg style="left:613px;top:11px" width="12" height="12" viewBox="0 0 12 12"><path d="M1.5 0 V12" stroke="#333" stroke-width="1"/><circle cx="1.5" cy="3.2" r="1.2" fill="#f4f4f4" stroke="#333" stroke-width="0.9"/><circle cx="1.5" cy="8.5" r="1.2" fill="#f4f4f4" stroke="#333" stroke-width="0.9"/><path d="M4 1 H12 M4 5.5 H9 M4 10 H10.5" stroke="#444" stroke-width="1.1"/></svg>
<svg style="left:633px;top:11px" width="13" height="12" viewBox="0 0 13 12"><path d="M2.5 1 L0.5 3 L2.5 5" fill="none" stroke="#333" stroke-width="1.1"/><path d="M1 3 H7.5 A4 4 0 0 1 7.5 11 H1.5" fill="none" stroke="#333" stroke-width="1.1"/></svg>
<svg style="left:652px;top:11px" width="13" height="12" viewBox="0 0 13 12"><path d="M10.5 1 L12.5 3 L10.5 5" fill="none" stroke="#333" stroke-width="1.1"/><path d="M12 3 H5.5 A4 4 0 0 0 5.5 11 H11.5" fill="none" stroke="#333" stroke-width="1.1"/></svg>
<div class="a" style="left:17px;top:43px;width:635px;height:40px;background:#f4f4f4"></div><div class="a" style="left:27px;top:53px;width:3px;height:20px;background:#1890ff"></div><span class="t" style="left:37px;top:56px;font-size:14px;color:#909090;font-weight:bold">位置与样式</span>
<div class="a" style="left:12px;top:103px;width:645px;height:122px;border:1px dashed #cfcfcf"></div>
<div class="a" style="left:109px;top:104px;width:2px;height:120px;background:#e4e7ed"></div>
<div class="a" style="left:109px;top:104px;width:2px;height:40px;background:#409eff"></div>
<span class="t" style="right:579px;top:117px;font-size:14px;color:#409eff">名著</span>
<span class="t" style="right:579px;top:157px;font-size:14px;color:#303133">儿童读物</span>
<span class="t" style="right:579px;top:197px;font-size:14px;color:#303133">工具书</span>
<div class="a" style="left:17px;top:260px;width:635px;height:40px;background:#f4f4f4"></div><div class="a" style="left:27px;top:270px;width:3px;height:20px;background:#1890ff"></div><span class="t" style="left:37px;top:273px;font-size:14px;color:#909090;font-weight:bold">动态显示隐藏标签页</span>
<div class="a" style="left:12px;top:320px;width:645px;height:161px;border:1px dashed #409eff;background:#f7f8fd"></div>
<div class="a" style="left:14px;top:321px;width:642px;height:159px;border:1px solid rgba(64,158,255,0.55);border-left:1px solid #409eff;border-right:1px solid #409eff"></div>
<span class="t" style="left:36px;top:335px;font-size:14px;color:#409eff">学校</span><span class="t" style="left:104px;top:335px;font-size:14px;color:#303133">年级</span><span class="t" style="left:172px;top:335px;font-size:14px;color:#303133">班级</span><div class="a" style="left:15px;top:360px;width:640px;height:2px;background:#e4e7ed"></div>
<span class="t" style="left:81px;top:388px;font-size:14px;color:#606266">学校</span>
<div class="a" style="left:121px;top:381px;width:530px;height:28px;border:1px solid #dcdfe6;border-radius:4px;background:#fff"></div>
<span class="t" style="left:137px;top:389px;font-size:12px;color:#c0c4cc">请输入学校</span>
<div class="a" style="left:17px;top:516px;width:635px;height:40px;background:#f4f4f4"></div><div class="a" style="left:27px;top:526px;width:3px;height:20px;background:#1890ff"></div><span class="t" style="left:37px;top:529px;font-size:14px;color:#909090;font-weight:bold">tab是否能被选中</span>
<div class="a" style="left:12px;top:576px;width:645px;height:129px;border:1px dashed #cfcfcf"></div>
<span class="t" style="left:36px;top:590px;font-size:14px;color:#409eff">学校</span><span class="t" style="left:104px;top:590px;font-size:14px;color:#303133">年级</span><span class="t" style="left:172px;top:590px;font-size:14px;color:#303133">班级</span><div class="a" style="left:15px;top:615px;width:640px;height:2px;background:#e4e7ed"></div>
<span class="t" style="left:80px;top:643px;font-size:14px;color:#606266">学校</span>
<div class="a" style="left:120px;top:636px;width:530px;height:28px;border:1px solid #dcdfe6;border-radius:4px;background:#fff"></div>
<span class="t" style="left:136px;top:644px;font-size:12px;color:#c0c4cc">请输入学校</span>
<svg style="left:581px;top:708px" width="12" height="8" viewBox="0 0 12 8"><path d="M0.5 4 Q6 -2 11.5 4 Q6 10 0.5 4Z" fill="none" stroke="#409eff" stroke-width="1"/><circle cx="6" cy="4" r="1.6" fill="none" stroke="#409eff" stroke-width="1"/></svg>
<span class="t" style="left:601px;top:707px;font-size:12px;color:#409eff">查看Api</span>
</div>
<div id="props" class="a">
<div class="a" style="left:0;top:0;width:339px;height:1px;background:#e9e7ee"></div>
<div class="a" style="left:0;top:1px;width:339px;height:32px;background:#f4f4f4"></div>
<span class="t" style="left:19px;top:11px;font-size:13px;color:#222">基础</span>
<svg style="left:320px;top:14px" width="11" height="7" viewBox="0 0 11 7"><path d="M0.5 0.5 L5.5 5.5 L10.5 0.5" stroke="#666" stroke-width="1.1" fill="none"/></svg>
<div class="a" style="left:0;top:33px;width:339px;height:639px;overflow:hidden">
<span class="t" style="left:9px;top:-13px;font-size:14px;color:#555;font-weight:bold">组件宽度</span>
<div class="a" style="left:9px;top:11px;width:277px;height:28px;border:1px solid #dcdfe6;border-radius:4px;background:#fff"></div>
<span class="t" style="left:9px;width:42px;text-align:center;top:20px;font-size:12.5px;color:#606266">1/6</span>
<div class="a" style="left:50px;top:11px;width:1px;height:28px;background:#dcdfe6"></div>
<span class="t" style="left:51px;width:40px;text-align:center;top:20px;font-size:12.5px;color:#606266">1/4</span>
<div class="a" style="left:90px;top:11px;width:1px;height:28px;background:#dcdfe6"></div>
<span class="t" style="left:91px;width:40px;text-align:center;top:20px;font-size:12.5px;color:#606266">1/3</span>
<div class="a" style="left:131px;top:11px;width:1px;height:28px;background:#dcdfe6"></div>
<span class="t" style="left:131px;width:41px;text-align:center;top:20px;font-size:12.5px;color:#606266">1/2</span>
<div class="a" style="left:171px;top:11px;width:1px;height:28px;background:#dcdfe6"></div>
<span class="t" style="left:172px;width:42px;text-align:center;top:20px;font-size:12.5px;color:#606266">2/3</span>
<div class="a" style="left:213px;top:11px;width:1px;height:28px;background:#dcdfe6"></div>
<span class="t" style="left:214px;width:42px;text-align:center;top:20px;font-size:12.5px;color:#606266">3/4</span>
<div class="a" style="left:256px;top:11px;width:30px;height:28px;background:#409eff;border-radius:0 4px 4px 0"></div>
<span class="t" style="left:256px;width:30px;text-align:center;top:20px;font-size:12.5px;color:#fff">1</span>
<span class="t" style="left:9px;top:58px;font-size:14px;color:#555;font-weight:bold">标签样式</span>
<div class="a" style="left:9px;top:335px;width:320px;height:111px;border:1px dashed #e0e0e0;background:#efefef"></div>
<div class="a" style="left:41px;top:376px;width:282px;height:28px;border:1px solid #dcdfe6;border-radius:4px;background:#fff;overflow:hidden"><div class="a" style="left:0;top:0;width:64px;height:26px;background:#f5f7fa;border-right:1px solid #dcdfe6"></div><div class="a" style="right:0;top:0;width:45px;height:26px;background:#f5f7fa;border-left:1px solid #dcdfe6"></div></div><span class="t" style="left:41px;width:65px;text-align:center;top:384px;font-size:12px;color:#909399">图标</span><span class="t" style="left:278px;width:45px;text-align:center;top:384px;font-size:13px;color:#888">•••</span>
<div class="a" style="left:41px;top:410px;width:282px;height:28px;border:1px solid #dcdfe6;border-radius:4px;background:#fff;overflow:hidden"><div class="a" style="left:0;top:0;width:88px;height:26px;background:#f5f7fa;border-right:1px solid #dcdfe6"></div><div class="a" style="right:0;top:0;width:18px;height:26px;background:#d9dce6;border-left:1px solid #dcdfe6"></div></div><span class="t" style="left:41px;width:89px;text-align:center;top:418px;font-size:12px;color:#909399">显示条件</span><span class="t" style="left:145px;top:418px;font-size:12px;color:#606266">!!this.formData.filed1</span><span class="t" style="left:305px;width:18px;text-align:center;top:418px;font-size:13px;color:#409eff">C</span>
<svg style="left:16px;top:461px" width="18" height="17" viewBox="0 0 18 17"><path d="M0 2.5 H18 M0 8.5 H18 M0 14.5 H18" stroke="#555" stroke-width="1.3"/><circle cx="5" cy="2.5" r="1.8" fill="#555"/><circle cx="11" cy="8.5" r="1.8" fill="#555"/><circle cx="7" cy="14.5" r="1.8" fill="#555"/></svg>
<div class="a" style="left:41px;top:453px;width:257px;height:32px;border:1px solid #dcdfe6;border-radius:4px;background:#fff;overflow:hidden"><div class="a" style="right:0;top:0;width:25px;height:30px;background:#f5f7fa;border-left:1px solid #dcdfe6"></div></div>
<span class="t" style="left:56px;top:464px;font-size:12px;color:#333">班级</span>
<span class="t" style="left:280px;top:464px;font-size:12px;color:#555">V</span>
<svg style="left:303px;top:460px" width="20" height="20" viewBox="0 0 20 20"><circle cx="10" cy="10" r="9.2" fill="none" stroke="#f56c6c" stroke-width="1.2"/><path d="M5 10 H15" stroke="#f56c6c" stroke-width="1.3"/></svg>
<div class="a" style="left:41px;top:490px;width:282px;height:28px;border:1px solid #dcdfe6;border-radius:4px;background:#fff;overflow:hidden"><div class="a" style="left:0;top:0;width:64px;height:26px;background:#f5f7fa;border-right:1px solid #dcdfe6"></div><div class="a" style="right:0;top:0;width:45px;height:26px;background:#f5f7fa;border-left:1px solid #dcdfe6"></div></div><span class="t" style="left:41px;width:65px;text-align:center;top:498px;font-size:12px;color:#909399">图标</span><span class="t" style="left:278px;width:45px;text-align:center;top:498px;font-size:13px;color:#888">•••</span>
<div class="a" style="left:41px;top:523px;width:282px;height:28px;border:1px solid #dcdfe6;border-radius:4px;background:#fff;overflow:hidden"><div class="a" style="left:0;top:0;width:88px;height:26px;background:#f5f7fa;border-right:1px solid #dcdfe6"></div><div class="a" style="right:0;top:0;width:18px;height:26px;background:#d9dce6;border-left:1px solid #dcdfe6"></div></div><span class="t" style="left:41px;width:89px;text-align:center;top:531px;font-size:12px;color:#909399">显示条件</span><span class="t" style="left:145px;top:531px;font-size:12px;color:#606266">!!this.formData.filed2</span><span class="t" style="left:305px;width:18px;text-align:center;top:531px;font-size:13px;color:#409eff">C</span>
<svg style="left:31px;top:567px" width="11" height="11" viewBox="0 0 11 11"><circle cx="5.5" cy="5.5" r="5" fill="none" stroke="#409eff" stroke-width="0.9"/><path d="M5.5 3 V8 M3 5.5 H8" stroke="#409eff" stroke-width="0.9"/></svg>
<span class="t" style="left:50px;top:566px;font-size:12px;color:#409eff">添加标签页</span>
<div class="a" style="left:9px;top:603px;width:320px;height:1px;background:#ebeef5"></div>
<div class="a" style="left:331px;top:88px;width:6px;height:544px;background:#dcdcdc;border-radius:3px"></div>
</div>
<div class="a" style="left:0;top:672px;width:339px;height:31px;background:#f4f4f4;border-top:1px solid #e8e8e8"></div>
<span class="t" style="left:19px;top:681px;font-size:13px;color:#222">高级</span>
<svg style="left:322px;top:683px" width="6" height="10" viewBox="0 0 6 10"><path d="M0.5 0.5 L5 5 L0.5 9.5" stroke="#666" stroke-width="1" fill="none"/></svg>
<div class="a" style="left:0;top:703px;width:339px;height:31px;background:#f4f4f4;border-top:1px solid #e8e8e8"></div>
<span class="t" style="left:19px;top:712px;font-size:13px;color:#222">样式</span>
<svg style="left:322px;top:714px" width="6" height="10" viewBox="0 0 6 10"><path d="M0.5 0.5 L5 5 L0.5 9.5" stroke="#666" stroke-width="1" fill="none"/></svg>
</div>
<div class="a" style="left:1165px;top:99px;width:1px;height:732px;background:#e2e2e2"></div>
<div id="rstrip" class="a">
<div class="a" style="left:0;top:78px;width:21px;height:1px;background:#cfcfcf"></div>
<div class="a" style="left:0;top:173px;width:21px;height:1px;background:#cfcfcf"></div>
<span class="t" style="left:4px;top:8px;font-size:12px;color:#222;width:12px;white-space:normal;line-height:15.5px">数据源</span>
<span class="t" style="left:3px;top:86px;font-size:12px;color:#222;width:12px;white-space:normal;line-height:16px">离线资源</span>
</div>
<div class="a" style="left:0;top:856px;width:1528px;height:1px;background:#6a6a6a"></div>
<!-- POPUP -->
<div class="a" style="left:821px;top:97px;width:28px;height:2px;background:#409eff"></div>
<div id="popup" class="a" style="left:1018px;top:209px;width:471px;height:319px;background:#fff;border:1px solid #ebeef5;border-radius:4px;box-shadow:0 2px 12px rgba(0,0,0,0.12)"></div>
<span class="t" style="left:1049px;top:243px;font-size:14px;color:#606266">编辑条件表达式( 必须返回true/false )</span>
<svg style="left:1312px;top:243px" width="13" height="13" viewBox="0 0 13 13"><circle cx="6.5" cy="6.5" r="6.5" fill="#555"/><circle cx="7.3" cy="3.4" r="1" fill="#fff"/><path d="M7.1 5.6 L5.8 10.3" stroke="#fff" stroke-width="1.6"/></svg>
<div class="a" style="left:1049px;top:260px;width:410px;height:200px;background:#1e1e1e"></div>
<div class="a" style="left:1113px;top:261px;width:287px;height:18px;border:1px solid #282828;border-right:none"></div>
<div class="a" style="left:1445px;top:260px;width:1px;height:200px;background:#3a3a3a"></div>
<div class="a" style="left:1409px;top:260px;width:4px;height:2px;background:#2d5a8a"></div><div class="a" style="left:1414px;top:260px;width:16px;height:2px;background:#555"></div>
<span class="t" style="left:1079px;top:264px;font-size:13px;font-family:'Liberation Mono',monospace;color:#c6c6c6">1</span>
<span class="t" style="left:1113px;top:263px;font-size:13.5px;letter-spacing:-0.45px;font-family:'Liberation Mono',monospace;color:#d4d4d4">!!<span style="color:#569cd6">this</span>.formData.filed1</span>
<div class="a" style="left:1403px;top:470px;width:56px;height:28px;background:#409eff;border-radius:3px"></div>
<span class="t" style="left:1403px;width:56px;text-align:center;top:478px;font-size:12px;color:#fff">确定</span>
<div class="a" style="left:1428px;top:495px;width:68px;height:33px;background:#303133;border-radius:4px"></div>
<span class="t" style="left:1428px;width:68px;text-align:center;top:507px;font-size:12px;color:#fff">绑定变量</span>
<div class="a" style="left:1467px;top:532px;width:36px;height:46px;border:3px solid #f01c1c;border-radius:2px"></div>
<!-- /POPUP -->
</body></html>
